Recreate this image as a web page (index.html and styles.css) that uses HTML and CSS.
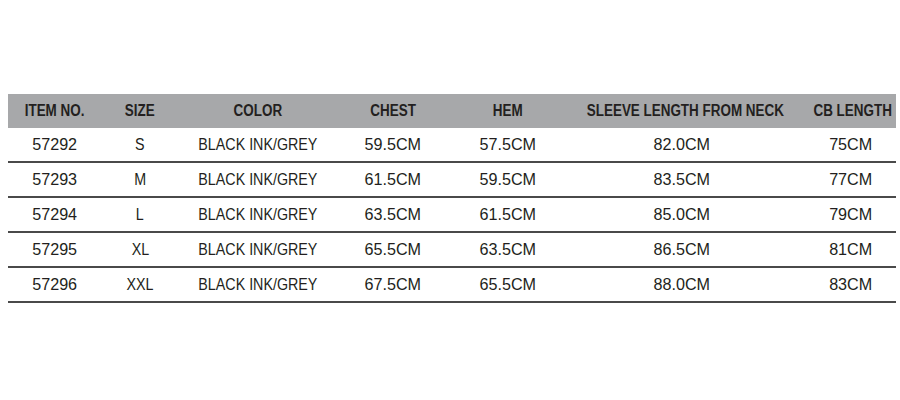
FILE: index.html
```html
<!DOCTYPE html>
<html>
<head>
<meta charset="utf-8">
<link rel="stylesheet" href="styles.css">
</head>
<body>
<table class="size-table">
  <colgroup>
    <col class="c1"><col class="c2"><col class="c3"><col class="c4"><col class="c5"><col class="c6"><col class="c7">
  </colgroup>
  <thead>
    <tr><th><span>ITEM NO.</span></th><th><span>SIZE</span></th><th><span>COLOR</span></th><th><span>CHEST</span></th><th><span>HEM</span></th><th><span>SLEEVE LENGTH FROM NECK</span></th><th class="last"><span>CB LENGTH</span></th></tr>
  </thead>
  <tbody>
    <tr><td class="num"><span>57292</span></td><td><span>S</span></td><td><span>BLACK INK/GREY</span></td><td class="num"><span>59.5CM</span></td><td class="num"><span>57.5CM</span></td><td class="num"><span>82.0CM</span></td><td class="num last"><span>75CM</span></td></tr>
    <tr><td class="num"><span>57293</span></td><td><span>M</span></td><td><span>BLACK INK/GREY</span></td><td class="num"><span>61.5CM</span></td><td class="num"><span>59.5CM</span></td><td class="num"><span>83.5CM</span></td><td class="num last"><span>77CM</span></td></tr>
    <tr><td class="num"><span>57294</span></td><td><span>L</span></td><td><span>BLACK INK/GREY</span></td><td class="num"><span>63.5CM</span></td><td class="num"><span>61.5CM</span></td><td class="num"><span>85.0CM</span></td><td class="num last"><span>79CM</span></td></tr>
    <tr><td class="num"><span>57295</span></td><td><span>XL</span></td><td><span>BLACK INK/GREY</span></td><td class="num"><span>65.5CM</span></td><td class="num"><span>63.5CM</span></td><td class="num"><span>86.5CM</span></td><td class="num last"><span>81CM</span></td></tr>
    <tr><td class="num"><span>57296</span></td><td><span>XXL</span></td><td><span>BLACK INK/GREY</span></td><td class="num"><span>67.5CM</span></td><td class="num"><span>65.5CM</span></td><td class="num"><span>88.0CM</span></td><td class="num last"><span>83CM</span></td></tr>
  </tbody>
</table>
</body>
</html>
```
FILE: styles.css
```css
html, body { margin: 0; padding: 0; background: #fff; }
body { padding: 94px 0 0 8px; }
.size-table {
  border-collapse: collapse;
  table-layout: fixed;
  width: 888px;
  font-family: "Liberation Sans", Arial, sans-serif;
  color: #231f20;
}
.c1 { width: 94px; } .c2 { width: 76px; } .c3 { width: 160px; } .c4 { width: 110px; }
.c5 { width: 120px; } .c6 { width: 228px; } .c7 { width: 100px; }
.size-table th {
  background: #a7a8aa;
  height: 34px;
  padding: 0;
  font-size: 16px;
  font-weight: bold;
  text-align: center;
  vertical-align: middle;
  white-space: nowrap;
}
.size-table td {
  height: 33px;
  padding: 0;
  font-size: 17px;
  text-align: center;
  vertical-align: middle;
  white-space: nowrap;
  border-bottom: 2px solid #4a4a4a;
}
.size-table th span,
.size-table td span {
  display: inline-block;
  transform: scaleX(0.84);
  transform-origin: center;
}
.size-table td.num span { transform: scaleX(0.95); }
.size-table .last { padding-left: 10px; }
```
